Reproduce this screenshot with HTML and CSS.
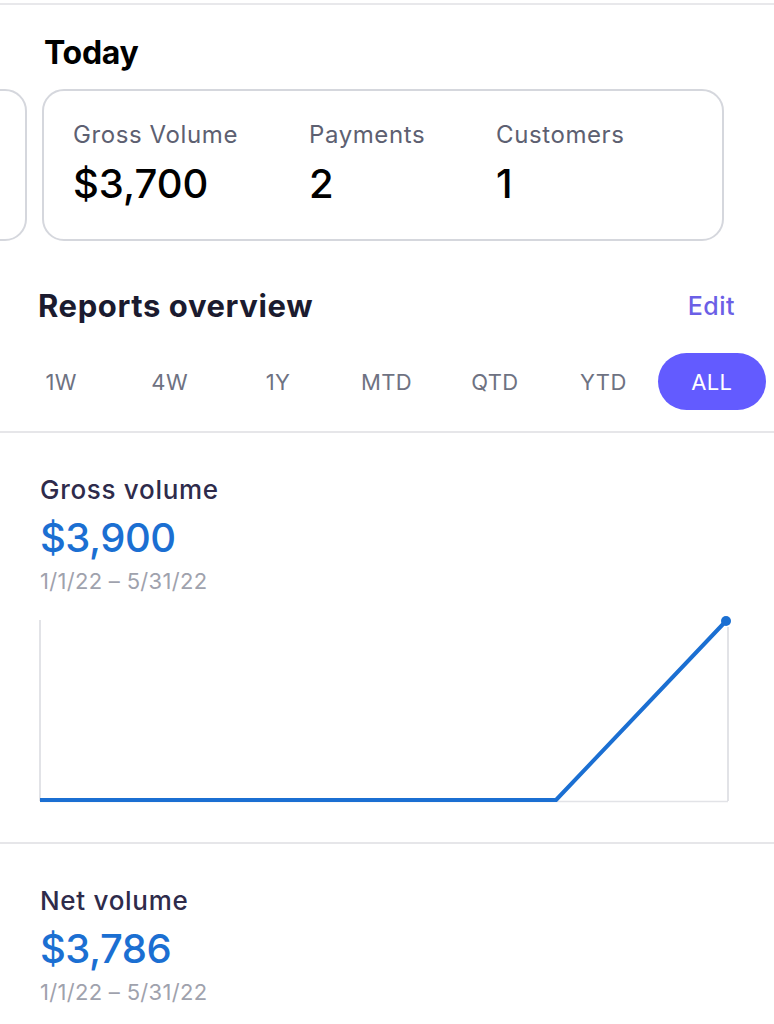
FILE: index.html
```html
<!DOCTYPE html>
<html lang="en">
<head>
<meta charset="utf-8">
<title>Dashboard</title>
<link rel="stylesheet" href="styles.css">
</head>
<body>
<div class="page">
  <div class="topline"></div>
  <h2 class="today-title">Today</h2>
  <div class="card-strip">
    <div class="stat-card stat-card--prev"></div>
    <div class="stat-card">
      <div class="stat">
        <div class="stat-label">Gross Volume</div>
        <div class="stat-value">$3,700</div>
      </div>
      <div class="stat">
        <div class="stat-label">Payments</div>
        <div class="stat-value">2</div>
      </div>
      <div class="stat">
        <div class="stat-label">Customers</div>
        <div class="stat-value">1</div>
      </div>
    </div>
  </div>

  <div class="reports-head">
    <h2 class="reports-title">Reports overview</h2>
    <span class="edit-link">Edit</span>
  </div>

  <div class="tabs">
    <span class="tab">1W</span>
    <span class="tab">4W</span>
    <span class="tab">1Y</span>
    <span class="tab">MTD</span>
    <span class="tab">QTD</span>
    <span class="tab">YTD</span>
    <span class="tab tab--active">ALL</span>
  </div>

  <section class="report">
    <div class="report-title">Gross volume</div>
    <div class="report-value">$3,900</div>
    <div class="report-range">1/1/22 – 5/31/22</div>
    <svg class="chart" width="694" height="190" viewBox="0 0 694 190">
      <line x1="2" y1="5" x2="2" y2="186" stroke="#d9dadf" stroke-width="1.5"/>
      <line x1="2" y1="186.5" x2="690" y2="186.5" stroke="#e2e3e7" stroke-width="1.5"/>
      <line x1="690" y1="12" x2="690" y2="186" stroke="#d9dadf" stroke-width="1.5"/>
      <polyline points="2,185 518,185 688,6" fill="none" stroke="#1b6fd2" stroke-width="4" stroke-linejoin="round"/>
      <circle cx="688" cy="6" r="5" fill="#1b6fd2"/>
    </svg>
  </section>

  <section class="report report--last">
    <div class="report-title">Net volume</div>
    <div class="report-value">$3,786</div>
    <div class="report-range">1/1/22 – 5/31/22</div>
  </section>
</div>
</body>
</html>
```

FILE: styles.css
```css
* {
  box-sizing: border-box;
}

html, body {
  margin: 0;
  padding: 0;
  background: #ffffff;
}

body {
  font-family: Inter, "Noto Sans", "Liberation Sans", sans-serif;
  color: #000;
  overflow: hidden;
}

.page {
  width: 774px;
  height: 1024px;
  overflow: hidden;
}

.topline {
  height: 5px;
  border-bottom: 2px solid #e8e8eb;
}

.today-title {
  margin: 28px 0 0 44px;
  font-size: 32px;
  line-height: 40px;
  font-weight: 700;
  letter-spacing: -0.3px;
  color: #000;
}

.card-strip {
  display: flex;
  gap: 15px;
  margin-left: -655px;
  margin-top: 16px;
}

.stat-card {
  flex: 0 0 682px;
  height: 152px;
  border: 2px solid #d5d7dd;
  border-radius: 22px;
  background: #fff;
  padding: 29px 0 0 29px;
  display: grid;
  grid-template-columns: 236px 187px 1fr;
}

.stat-label {
  font-size: 24px;
  line-height: 29px;
  color: #5d6071;
  letter-spacing: 0.6px;
}

.stat-value {
  margin-top: 11px;
  font-size: 40px;
  line-height: 48px;
  font-weight: 500;
  color: #000;
  letter-spacing: 0;
}

.reports-head {
  display: flex;
  justify-content: space-between;
  align-items: center;
  margin-top: 47px;
  padding: 0 39px 0 38px;
}

.reports-title {
  margin: 0;
  font-size: 31px;
  line-height: 36px;
  font-weight: 700;
  color: #1b1b2f;
  letter-spacing: 0.6px;
}

.edit-link {
  font-size: 25px;
  line-height: 36px;
  font-weight: 500;
  color: #6b5fe6;
  letter-spacing: 0.5px;
}

.tabs {
  display: grid;
  grid-template-columns: repeat(7, 1fr);
  margin-top: 29px;
  padding: 0 8px 21px 7px;
  border-bottom: 2px solid #e6e6e9;
}

.tab {
  height: 57px;
  display: flex;
  align-items: center;
  justify-content: center;
  font-size: 22px;
  letter-spacing: 0.4px;
  color: #6e7282;
}

.tab--active {
  background: #635bff;
  color: #fff;
  border-radius: 29px;
}

.report {
  padding: 41px 0 37px 40px;
  border-bottom: 2px solid #e6e6e9;
}

.report--last {
  border-bottom: none;
}

.report-title {
  font-size: 26px;
  line-height: 31px;
  font-weight: 500;
  color: #2e2b4b;
  letter-spacing: 0.7px;
}

.report-value {
  margin-top: 9px;
  font-size: 40px;
  line-height: 48px;
  font-weight: 500;
  color: #1b6fd2;
  letter-spacing: -0.5px;
}

.report-range {
  margin-top: 6px;
  font-size: 22px;
  line-height: 26px;
  color: #9fa2ad;
  letter-spacing: 0.3px;
}

.chart {
  display: block;
  margin: 21px 0 0 -2px;
}
```
